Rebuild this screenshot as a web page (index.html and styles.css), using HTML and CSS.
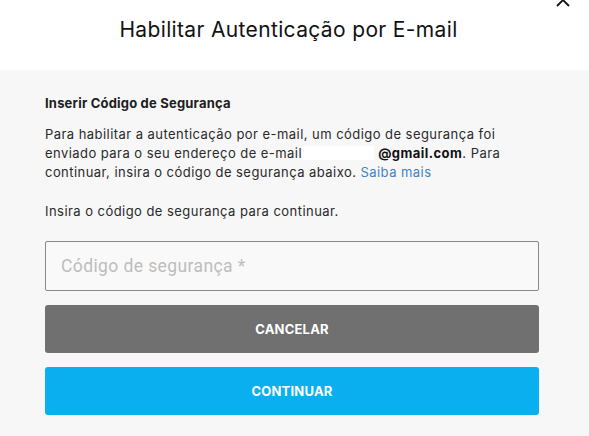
FILE: index.html
```html
<!DOCTYPE html>
<html lang="pt-BR">
<head>
  <meta charset="UTF-8" />
  <meta name="viewport" content="width=device-width, initial-scale=1.0"/>
  <title>Habilitar Autenticação por E-mail</title>
  <link rel="stylesheet" href="styles.css">
</head>
<body>
  <div class="modal">
    <button class="close" aria-label="Fechar">
      <svg width="14" height="14" viewBox="0 0 14 14">
        <path d="M1 1 L13 13 M13 1 L1 13" stroke="#111" stroke-width="1.8" fill="none"/>
      </svg>
    </button>

    <header>
      <h1>Habilitar Autenticação por E-mail</h1>
    </header>

    <div class="content">
      <h3>Inserir Código de Segurança</h3>
      <p>
        Para habilitar a autenticação por e-mail, um código de segurança foi
        enviado para o seu endereço de e-mail <span class="hidden-mail"></span><strong>@gmail.com</strong>. Para
        continuar, insira o código de segurança abaixo. <a href="#">Saiba mais</a>
      </p>
      <p>Insira o código de segurança para continuar.</p>

      <input type="text" placeholder="Código de segurança *" />

      <button class="btn btn-cancel">CANCELAR</button>
      <button class="btn btn-continue">CONTINUAR</button>
    </div>
  </div>
</body>
</html>
```

FILE: styles.css
```css
body {
  margin: 0;
  font-family: 'Inter', 'Noto Sans', sans-serif;
  color: #202020;
  background: #f7f7f7;
}

.modal {
  position: relative;
  min-height: 436px;
  background: #f7f7f7;
}

.close {
  position: absolute;
  top: -7px;
  right: 19px;
  background: none;
  border: none;
  padding: 0;
  line-height: 0;
  cursor: pointer;
}

header {
  background: white;
  height: 70px;
  display: flex;
  justify-content: center;
  padding: 17px 12px 0 0;
  box-sizing: border-box;
}

header h1 {
  margin: 0;
  font-size: 21px;
  font-weight: 400;
  letter-spacing: 0.35px;
  color: #121212;
}

.content {
  padding: 24px 50px 20px 45px;
}

.content h3 {
  margin: 0 0 12px;
  font-size: 13px;
  font-weight: 700;
  letter-spacing: 0.2px;
  line-height: 19px;
}

.content p {
  margin: 0 0 20px;
  font-size: 13px;
  line-height: 19px;
  letter-spacing: 0.45px;
  color: #2a2a2a;
}

.content strong {
  font-weight: 700;
  color: #111;
}

.hidden-mail {
  display: inline-block;
  width: 72px;
  height: 14px;
  background: white;
  vertical-align: -2px;
  margin-left: -4px;
  margin-right: 4px;
}

.content a {
  color: #3d83c4;
  text-decoration: none;
}

input {
  display: block;
  width: 100%;
  box-sizing: border-box;
  height: 50px;
  padding: 0 15px;
  border: 1px solid #8a8a8a;
  border-radius: 2px;
  background: #f9f9f9;
  font-family: 'Roboto', sans-serif;
  font-size: 17.5px;
  letter-spacing: 0.4px;
  margin-bottom: 14px;
}

input::placeholder {
  color: #bdbdbd;
}

.btn {
  display: block;
  width: 100%;
  height: 48px;
  border: none;
  border-radius: 3px;
  color: white;
  font-family: inherit;
  font-size: 13px;
  font-weight: 700;
  letter-spacing: 0.2px;
  cursor: pointer;
}

.btn-cancel {
  background: #707070;
  margin-bottom: 14px;
}

.btn-continue {
  background: #0aaff0;
}
```
